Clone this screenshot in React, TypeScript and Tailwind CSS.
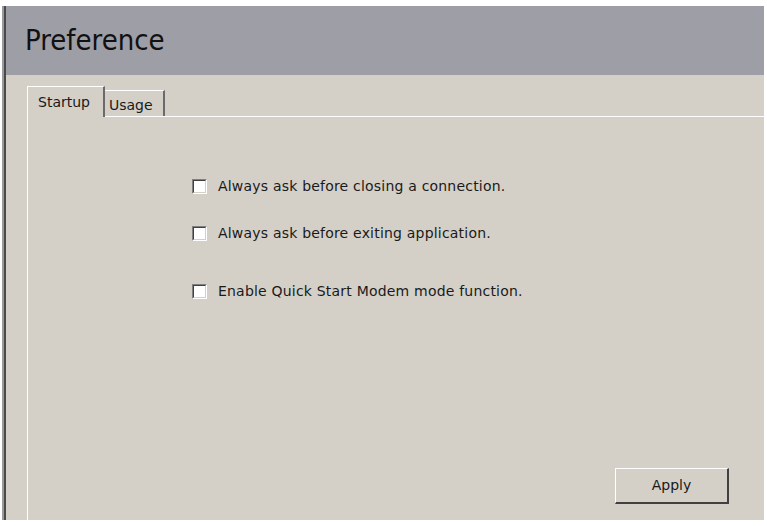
import React from "react";

const font = { fontFamily: '"DejaVu Sans", Verdana, sans-serif' };

function Check({ label, className }: { label: string; className?: string }) {
  return (
    <div className={"flex items-center " + (className ?? "")}>
      <div className="w-[15px] h-[15px] border-t border-l border-t-[#808080] border-l-[#808080] border-b border-r border-b-white border-r-white">
        <div className="w-full h-full bg-white border-t border-l border-t-[#404040] border-l-[#404040] border-b border-r border-b-[#d4d0c8] border-r-[#d4d0c8]" />
      </div>
      <span className="ml-[11px] text-[14px] leading-[20px] text-[#1a1a1a] tracking-[0.2px]">{label}</span>
    </div>
  );
}

export default function App() {
  return (
    <div className="w-[767px] h-[526px] bg-white overflow-hidden" style={font}>
      <div className="mt-[6px] ml-[2px] w-[762px] h-[514px] flex">
        <div className="w-[2px] bg-[#9a9a9a]" />
        <div className="w-[2px] bg-[#4a4a4a]" />
        <div className="flex-1 flex flex-col">
          <div className="h-[69px] bg-[#9e9ea6] flex items-center pl-[19px]">
            <span className="text-[29px] text-[#111] font-stretch-condensed leading-none">Preference</span>
          </div>
          <div className="flex-1 bg-[#d4d0c8] flex flex-col pt-[11px] pl-[21px]">
            <div className="flex items-end h-[31px]">
              <div className="h-[31px] w-[78px] border-t border-l border-white border-r-2 border-r-[#6a6a6a] flex items-start pl-[10px] pt-[7px] relative z-10 bg-[#d4d0c8]">
                <span className="text-[14px] leading-[17px] text-[#1a1a1a]">Startup</span>
              </div>
              <div className="h-[26px] w-[60px] border-t border-white border-r-2 border-r-[#6a6a6a] flex items-start pl-[4px] pt-[6px] mb-[1px]">
                <span className="text-[14px] leading-[17px] text-[#1a1a1a]">Usage</span>
              </div>
            </div>
            <div className="flex-1 -mt-[1px] border-t border-l border-white flex flex-col">
              <div className="pl-[164px] pt-[59px] flex flex-col">
                <Check label="Always ask before closing a connection." />
                <Check label="Always ask before exiting application." className="mt-[27px]" />
                <Check label="Enable Quick Start Modem mode function." className="mt-[38px]" />
              </div>
              <div className="flex-1" />
              <div className="flex justify-end pr-[35px] pb-[16px]">
                <div className="w-[114px] h-[36px] border-t border-l border-white border-b-2 border-r-2 border-b-[#404040] border-r-[#404040] flex items-center justify-center">
                  <span className="text-[14px] text-[#1a1a1a]">Apply</span>
                </div>
              </div>
            </div>
          </div>
        </div>
      </div>
    </div>
  );
}
